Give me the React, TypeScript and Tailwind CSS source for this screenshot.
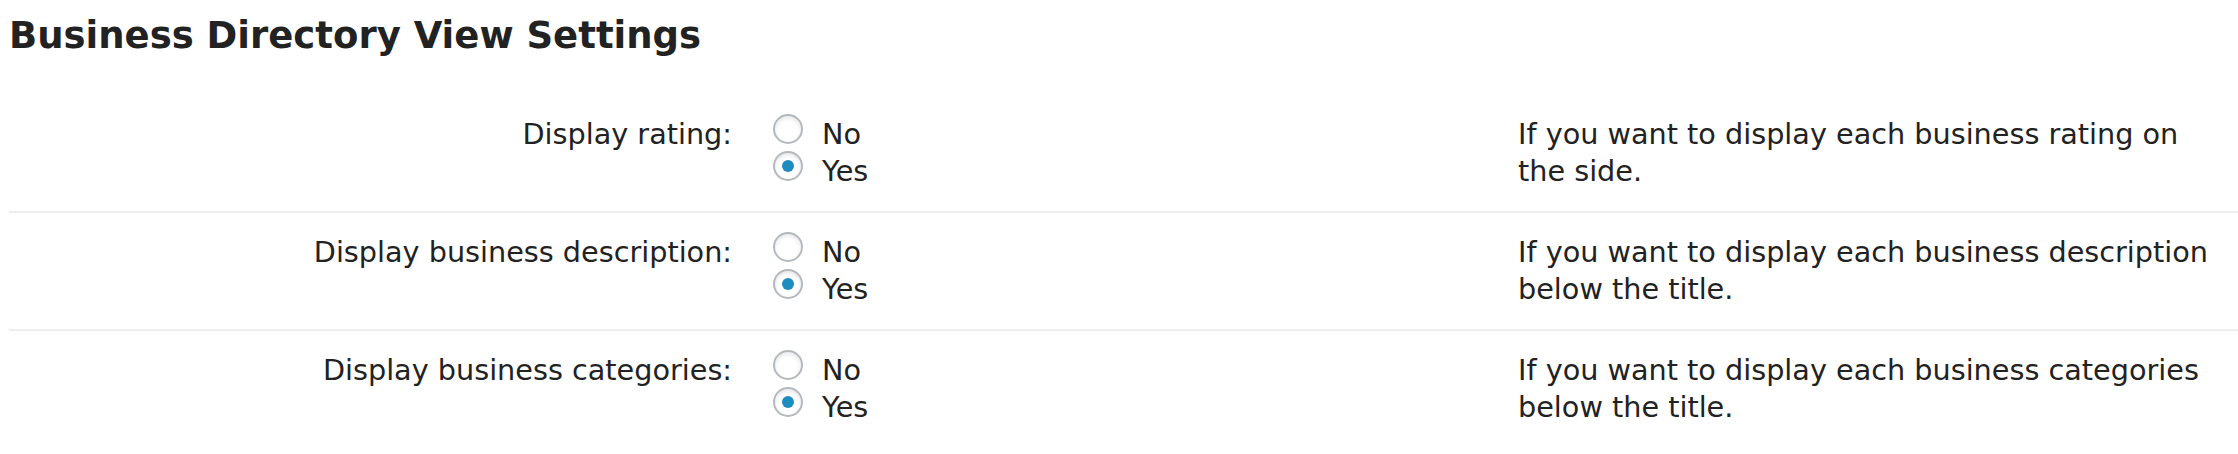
import React from 'react';

const ROWS = [
  {
    label: 'Display rating:',
    name: 'rating',
    help: 'If you want to display each business rating on the side.',
  },
  {
    label: 'Display business description:',
    name: 'description',
    help: 'If you want to display each business description below the title.',
  },
  {
    label: 'Display business categories:',
    name: 'categories',
    help: 'If you want to display each business categories below the title.',
  },
];

function Radio({ checked }: { checked: boolean }) {
  return (
    <span className="mt-[-2px] w-[30px] h-[30px] shrink-0 rounded-full border-2 border-[#b4b9be] bg-white shadow-[inset_0_2px_4px_rgba(0,0,0,0.1)] flex items-center justify-center">
      {checked && <span className="w-[12px] h-[12px] rounded-full bg-[#1e8cbe]" />}
    </span>
  );
}

function SettingRow({ label, name, help, last }: { label: string; name: string; help: string; last: boolean }) {
  const [value, setValue] = React.useState('yes');

  return (
    <div className={`flex h-[118px] pt-[21px] ${last ? '' : 'border-b-2 border-[#eeeeee]'}`}>
      <div className="w-[723px] shrink-0 text-right leading-[37px]">{label}</div>
      <div className="ml-[41px] w-[745px] shrink-0 flex flex-col">
        {['no', 'yes'].map(v => (
          <label key={v} className="flex items-start gap-[19px] cursor-pointer" onClick={() => setValue(v)}>
            <Radio checked={value === v} />
            <span className="leading-[37px]">{v === 'no' ? 'No' : 'Yes'}</span>
            <input type="radio" name={name} value={v} checked={value === v} readOnly className="hidden" />
          </label>
        ))}
      </div>
      <div className="w-[700px] shrink-0 leading-[37px]">{help}</div>
    </div>
  );
}

export default function App() {
  return (
    <div className="w-[2238px] h-[454px] bg-white pl-[9px] text-[#222] text-[28.7px] font-['DejaVu_Sans',Verdana,sans-serif] overflow-hidden">
      <h2 className="mt-[14px] mb-[37px] text-[37px] font-bold leading-[44px]">Business Directory View Settings</h2>
      <div>
        {ROWS.map((r, i) => (
          <SettingRow key={r.name} {...r} last={i === ROWS.length - 1} />
        ))}
      </div>
    </div>
  );
}
